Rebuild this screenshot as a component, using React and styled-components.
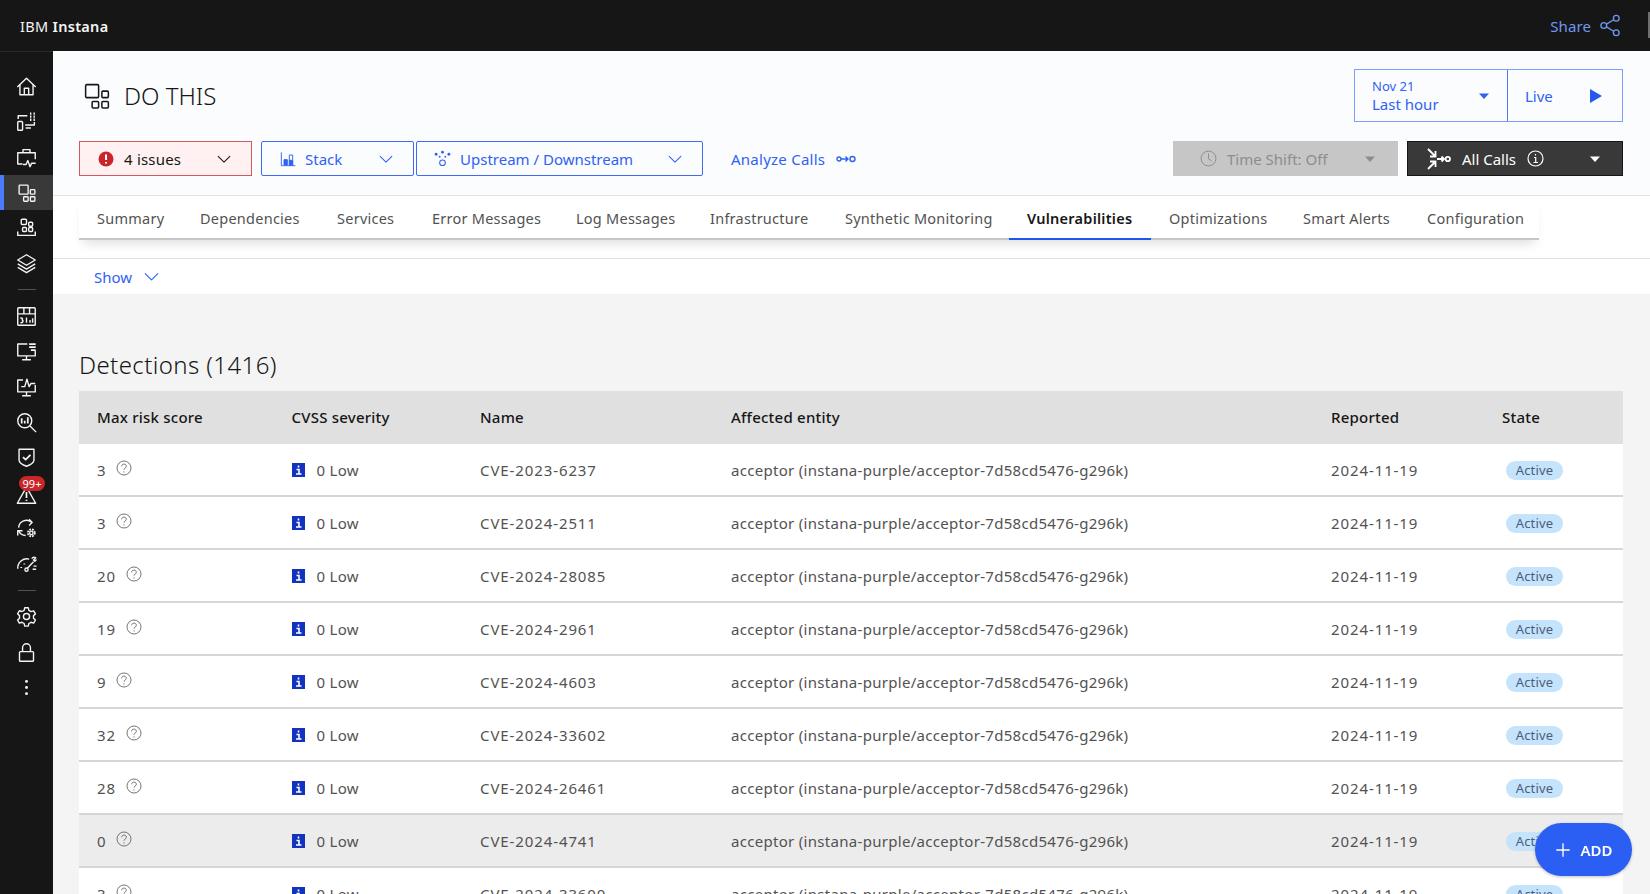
import styled, { createGlobalStyle } from "styled-components";

const GlobalStyle = createGlobalStyle`
  html, body {
    margin: 0;
    height: 100%;
    overflow: hidden;
    background: #f4f4f4;
    font-family: "Noto Sans", "Liberation Sans", sans-serif;
    font-size: 15px;
    color: #525252;
  }
  * { box-sizing: border-box; }
`;

const Icon = ({ size = 22, sw = 1.5, children, ...rest }) => (
  <svg
    width={size}
    height={size}
    viewBox="0 0 24 24"
    fill="none"
    stroke="currentColor"
    strokeWidth={sw}
    strokeLinejoin="round"
    {...rest}
  >
    {children}
  </svg>
);

const AppsGlyph = () => (
  <>
    <rect x="1.5" y="1.5" width="12" height="12" rx="1" />
    <rect x="16.5" y="7.5" width="6" height="6" rx="1" />
    <rect x="7.5" y="17" width="6" height="6" rx="1" />
    <rect x="16.5" y="17" width="6" height="6" rx="1" />
  </>
);

const navTop = [
  <><path d="M1.5 12.5 12 2.5l10.5 10" /><path d="M4.5 10v11.5h15V10" /><path d="M9.5 21.5V14h5v7.5" /></>,
  <><rect x="2" y="12" width="5.5" height="10" rx="1" /><path d="M2.5 9V5.5h10.5" /><path d="M21 12.5V16H10.5M11 19.5h6" /><path strokeWidth="2.6" d="M16 3h1.6M20 3h1.6M16 6.5h1.6M20 6.5h1.6M16 10h1.6M20 10h1.6" /></>,
  <><path d="M7.5 19.5H2V6.5h20v7.5" /><path d="M8 6.5V3h8v3.5" /><path d="M8 20h3.5l2-4.5 2.5 7 2-4h4.5" /></>,
  <AppsGlyph />,
  <><rect x="6" y="2.5" width="6" height="6" rx="1" /><rect x="14.5" y="6" width="4.5" height="4.5" rx="1" /><rect x="7.5" y="12" width="4.5" height="4.5" rx="1" /><rect x="14.5" y="12" width="4.5" height="4.5" rx="1" /><path d="M2 16.5V21h20v-4.5" /></>,
  <><path d="M12 2 22 8l-10 6L2 8Z" /><path d="m2 12.5 10 6 10-6" /><path d="m2 16.5 10 6 10-6" /></>,
];

const navMiddle = [
  <><rect x="2" y="2" width="20" height="20" rx="1" /><path d="M2 9h20M9 2v7M15.5 2v7" /><path d="M5 14c2-.8 3.2.2 2 2 1.8.4 1.2 3.5-2 3M12 13v6M16 16v3M19 14v5" /></>,
  <><path d="M13 3.5H2V17h20v-6" /><path d="M12 17v4M7 21.5h10" /><path strokeWidth="2" d="M15 3.5h7.5M15 7h7.5M17 10.5h5.5" /></>,
  <><path d="M8 3.5H2V17h20V9" /><path d="M12 17v4M7 21.5h10" /><path d="M6 11h4l2.5-8.5L15 11l2-3.5h5" /></>,
  <><circle cx="10" cy="10" r="8" /><path d="m16 16 7 7" /><path strokeWidth="2" d="M6.5 7v6M10 10v3M13.5 6v7" /></>,
  <><path d="M3.5 2.5h17V15c0 3.5-8.5 7-8.5 7s-8.5-3.5-8.5-7Z" /><path strokeWidth="2" d="m8 11.5 3 3 5.5-5.5" /></>,
  <><path d="M12 3.5 22.5 22h-21Z" /><path strokeWidth="2" d="M12 9v7M12 18v1.5" /></>,
  <><path d="M3 11a9 9 0 0 1 15-6" /><path d="M15 1.5 18.5 5 15 8.5" /><path d="M11 20a9 9 0 0 1-8-5.500" /><path d="M2 20v-5.500h5.500" /><circle cx="17.500" cy="17" r="2" /><circle cx="17.500" cy="17" r="4" strokeDasharray="2 1.200" strokeWidth="2" /></>,
  <><path d="M2 18a10.500 10.500 0 0 1 13-11" /><path strokeWidth="2" d="M6 16v1M9.500 12v1" /><circle cx="12" cy="19" r="1.800" /><path d="m13 17.500 7-7.500" /><path d="M18 6.500c1-1.500 3-2 4.500-1L20 8l1.500 1.500 2-2" /><path d="M20 15h3.500M19 18.500h4" /></>,
];

const navBottom = [
  <><circle cx="12" cy="12" r="3.500" /><path d="M10 2h4l.7 3 2.500 1.400 3-.9 2 3.500-2.200 2.100v2.800l2.200 2.100-2 3.500-3-.9-2.500 1.400-.7 3h-4l-.7-3-2.500-1.400-3 .9-2-3.500 2.200-2.100V11l-2.200-2.100 2-3.500 3 .9 2.500-1.400Z" /></>,
  <><rect x="4" y="11" width="16" height="11" rx="1" /><path d="M7.500 11V6.500a4.500 4.500 0 0 1 9 0V11" /></>,
  <g fill="currentColor" stroke="none"><circle cx="12" cy="5" r="1.700" /><circle cx="12" cy="12" r="1.700" /><circle cx="12" cy="19" r="1.700" /></g>,
];

const tabs = [
  ["Summary", 103],
  ["Dependencies", 137],
  ["Services", 95],
  ["Error Messages", 144],
  ["Log Messages", 134],
  ["Infrastructure", 135],
  ["Synthetic Monitoring", 182],
  ["Vulnerabilities", 142],
  ["Optimizations", 134],
  ["Smart Alerts", 124],
  ["Configuration", 113],
];

const rows = [
  [3, "CVE-2023-6237"],
  [3, "CVE-2024-2511"],
  [20, "CVE-2024-28085"],
  [19, "CVE-2024-2961"],
  [9, "CVE-2024-4603"],
  [32, "CVE-2024-33602"],
  [28, "CVE-2024-26461"],
  [0, "CVE-2024-4741"],
  [3, "CVE-2024-33600"],
];

const Chevron = ({ size = 14 }) => (
  <Icon size={size} sw={1.8}>
    <path d="m1.500 7 10.500 10.500L22.500 7" />
  </Icon>
);

const Caret = ({ size = 10 }) => (
  <svg width={size} height={size} viewBox="0 0 10 10">
    <path d="M0 2.500h10L5 8Z" fill="currentColor" />
  </svg>
);

export default function App() {
  return (
    <Page>
      <GlobalStyle />
      <TopBar>
        <Brand>
          IBM <b>Instana</b>
        </Brand>
        <ShareLink>
          Share
          <Icon size={23} sw={1.4}>
            <circle cx="18" cy="4.500" r="3" />
            <circle cx="5" cy="12" r="3" />
            <circle cx="18" cy="19.500" r="3" />
            <path d="m7.800 10.500 7.500-4.500M7.800 13.500l7.500 4.500" />
          </Icon>
        </ShareLink>
        <EdgeTab />
      </TopBar>
      <Body>
        <Sidebar>
          {navTop.map((glyph, i) => (
            <NavItem key={i} $active={i === 3}>
              <Icon size={i === 3 ? 18 : 21} sw={i === 3 ? 1.8 : 1.6}>{glyph}</Icon>
            </NavItem>
          ))}
          <NavRule />
          {navMiddle.map((glyph, i) => (
            <NavItem key={i} $drop={i === 5 ? 3 : 0}>
              <Icon size={21} sw={1.6}>{glyph}</Icon>
              {i === 5 && <NavBadge>99+</NavBadge>}
            </NavItem>
          ))}
          <NavRule />
          {navBottom.map((glyph, i) => (
            <NavItem key={i}>
              <Icon size={21} sw={1.6}>{glyph}</Icon>
            </NavItem>
          ))}
        </Sidebar>
        <Main>
          <Header>
            <TitleRow>
              <Title>
                <Icon size={26} sw={1.4}>
                  <AppsGlyph />
                </Icon>
                DO THIS
              </Title>
              <DateBox>
                <DateRange>
                  <span>
                    <DateSmall>Nov 21</DateSmall>
                    Last hour
                  </span>
                  <Caret />
                </DateRange>
                <LiveCell>
                  Live
                  <svg width="14" height="14" viewBox="0 0 14 14">
                    <path d="M1 0v14l12-7Z" fill="#2459f0" />
                  </svg>
                </LiveCell>
              </DateBox>
            </TitleRow>
            <ActionRow>
              <Actions>
                <IssuesButton>
                  <svg width="16" height="16" viewBox="0 0 16 16">
                    <circle cx="8" cy="8" r="7.500" fill="#c8262a" />
                    <path d="M8 3.500v5.500M8 11v1.500" stroke="#fff" strokeWidth="2" />
                  </svg>
                  <span>4 issues</span>
                  <Chevron />
                </IssuesButton>
                <FilterButton $width={153} $pad={18} $gapLeft={9}>
                  <Icon size={16} sw={1.4}>
                    <path d="M2 2v20h21" />
                    <rect x="6" y="13" width="5" height="8" fill="currentColor" />
                    <rect x="14" y="6" width="5" height="15" />
                    <rect x="14" y="14" width="5" height="7" fill="currentColor" />
                  </Icon>
                  <span>Stack</span>
                  <Chevron />
                </FilterButton>
                <FilterButton $width={287} $pad={17} $gapLeft={2}>
                  <Icon size={17} sw={1.5}>
                    <circle cx="12" cy="18" r="4" />
                    <g fill="currentColor" stroke="none">
                      <circle cx="12" cy="3" r="2" />
                      <circle cx="3" cy="6" r="2" />
                      <circle cx="21" cy="6" r="2" />
                      <circle cx="8" cy="9.500" r="1.300" />
                      <circle cx="16" cy="9.500" r="1.300" />
                    </g>
                  </Icon>
                  <span>Upstream / Downstream</span>
                  <Chevron />
                </FilterButton>
                <AnalyzeLink>
                  Analyze Calls
                  <svg width="20" height="10" viewBox="0 0 20 10" fill="none" stroke="currentColor" strokeWidth="1.400">
                    <circle cx="3" cy="5" r="2" />
                    <path d="M5 5h7M9.500 2.500 12 5 9.500 7.500" />
                    <circle cx="16.500" cy="5" r="2.500" />
                  </svg>
                </AnalyzeLink>
              </Actions>
              <Actions>
                <TimeShift>
                  <Icon size={17} sw={1.4}>
                    <circle cx="12" cy="12" r="10.500" />
                    <path d="M12 5v7.500l4.500 3" />
                  </Icon>
                  <span>Time Shift: Off</span>
                  <Caret />
                </TimeShift>
                <CallsButton>
                  <svg width="25" height="24" viewBox="0 0 25 24" fill="none" stroke="currentColor" strokeWidth="1.800">
                    <path d="M2 2l7.500 7.500M9.500 4v5.500H4" />
                    <path d="M2 22l7.500-7.500M4 14.500h5.500V20" />
                    <path d="M11 12h7M15.500 9.500 18 12l-2.500 2.500" />
                    <circle cx="21.800" cy="12" r="2.200" />
                  </svg>
                  All Calls
                  <svg width="17" height="17" viewBox="0 0 17 17" fill="none" stroke="currentColor" strokeWidth="1.200">
                    <circle cx="8.500" cy="8.500" r="7.500" />
                    <path d="M7 7.500h1.700V12.500M6.500 12.500h4.500M8.500 4v1.500" />
                  </svg>
                  <CallsCaret>
                    <Caret />
                  </CallsCaret>
                </CallsButton>
              </Actions>
            </ActionRow>
          </Header>
          <TabsBand>
            <TabStrip>
              {tabs.map(([label, width]) => (
                <Tab key={label} $width={width} $active={label === "Vulnerabilities"}>
                  {label}
                </Tab>
              ))}
            </TabStrip>
          </TabsBand>
          <ShowBar>
            Show
            <Chevron size={15} />
          </ShowBar>
          <Content>
            <Heading>Detections (1416)</Heading>
            <HeadRow>
              <span>Max risk score</span>
              <span>CVSS severity</span>
              <span>Name</span>
              <span>Affected entity</span>
              <span>Reported</span>
              <span>State</span>
            </HeadRow>
            {rows.map(([score, name], i) => (
              <DataRow key={name} $hover={i === 7}>
                <Score>
                  <Digits>{score}</Digits>
                  <Icon size={16} sw={1.2} style={{ marginTop: -3 }}>
                    <circle cx="12" cy="12" r="10.500" />
                    <path d="M8.500 9.500C8.500 5 15.500 5 15.500 9.500c0 2.500-3.500 2.500-3.500 5M12 17v1.800" />
                  </Icon>
                </Score>
                <Severity>
                  <svg width="13" height="14" viewBox="0 0 13 14">
                    <rect width="13" height="14" fill="#1133bd" />
                    <path d="M6.500 2.500v2M4.500 6.500h2.500v4.500M4 11h5.500" stroke="#fff" strokeWidth="1.600" fill="none" />
                  </svg>
                  0 Low
                </Severity>
                <Digits>{name}</Digits>
                <span>acceptor (instana-purple/acceptor-7d58cd5476-g296k)</span>
                <Digits>2024-11-19</Digits>
                <StatePill>Active</StatePill>
              </DataRow>
            ))}
          </Content>
        </Main>
      </Body>
      <AddButton>
        <Icon size={18} sw={1.8}>
          <path d="M12 3v18M3 12h18" />
        </Icon>
        ADD
      </AddButton>
    </Page>
  );
}

const Page = styled.div`
  height: 100vh;
  display: flex;
  flex-direction: column;
  overflow: hidden;
`;

const TopBar = styled.header`
  position: relative;
  height: 51px;
  flex: none;
  display: flex;
  align-items: center;
  justify-content: space-between;
  padding: 0 28px 0 20px;
  background: #161616;
  color: #f4f4f4;
`;

const Brand = styled.div`
  font-size: 14.5px;
  letter-spacing: 0.3px;
  b {
    font-weight: 600;
  }
`;

const ShareLink = styled.a`
  display: flex;
  align-items: center;
  gap: 8px;
  color: #6f98ee;
  font-size: 15px;
  letter-spacing: 0.1px;
`;

const EdgeTab = styled.span`
  position: absolute;
  right: 0;
  top: 12px;
  width: 2px;
  height: 26px;
  background: #6f6f6f;
`;

const Body = styled.div`
  flex: 1;
  min-height: 0;
  display: flex;
`;

const Sidebar = styled.nav`
  width: 53px;
  flex: none;
  padding-top: 17px;
  background: #161616;
  border-top: 1px solid #2a2a2a;
  color: #f4f4f4;
`;

const NavItem = styled.div`
  position: relative;
  height: 35.3px;
  display: flex;
  align-items: center;
  justify-content: center;
  background: ${(p) => (p.$active ? "#393939" : "transparent")};
  box-shadow: ${(p) => (p.$active ? "inset 4px 0 0 #4a7bff" : "none")};
  svg {
    margin-top: ${(p) => p.$drop || 0}px;
  }
`;

const NavRule = styled.div`
  width: 18px;
  height: 1px;
  margin: 8.5px auto 8.5px;
  background: #525252;
`;

const NavBadge = styled.span`
  position: absolute;
  left: 19px;
  top: 1px;
  width: 26px;
  height: 15px;
  border-radius: 8px;
  background: #c8262a;
  color: #fff;
  font-size: 11px;
  line-height: 15px;
  text-align: center;
`;

const Main = styled.main`
  flex: 1;
  min-width: 0;
  background: #f4f4f4;
`;

const Header = styled.section`
  height: 145px;
  padding: 18px 27px 0 26px;
  background: #fbfcfe;
  border-bottom: 1px solid #e0e4e8;
`;

const TitleRow = styled.div`
  height: 53px;
  display: flex;
  align-items: center;
  justify-content: space-between;
`;

const Title = styled.h1`
  display: flex;
  align-items: center;
  gap: 14px;
  margin: 0 0 0 5px;
  color: #161616;
  font-size: 24px;
  font-weight: 300;
`;

const DateBox = styled.div`
  width: 269px;
  height: 53px;
  display: flex;
  border: 1px solid #7f9cff;
  color: #2f62f2;
`;

const DateRange = styled.div`
  width: 153px;
  display: flex;
  align-items: center;
  justify-content: space-between;
  padding: 0 18px 0 17px;
  border-right: 1px solid #4f78f5;
  font-size: 15px;
  line-height: 19px;
`;

const DateSmall = styled.small`
  display: block;
  font-size: 13px;
  line-height: 18px;
`;

const LiveCell = styled.div`
  flex: 1;
  display: flex;
  align-items: center;
  justify-content: space-between;
  padding: 0 19px 0 17px;
  font-size: 15px;
`;

const ActionRow = styled.div`
  margin-top: 19px;
  display: flex;
  justify-content: space-between;
`;

const Actions = styled.div`
  display: flex;
  align-items: center;
`;

const ButtonBase = styled.button`
  height: 35px;
  display: flex;
  align-items: center;
  font: inherit;
  font-size: 15px;
  padding: 0;
`;

const IssuesButton = styled(ButtonBase)`
  width: 173px;
  gap: 10px;
  padding: 0 20px 0 18px;
  background: #fff1f1;
  border: 1px solid #d3595d;
  color: #161616;
  letter-spacing: 0.2px;
  span {
    flex: 1;
    text-align: left;
  }
`;

const FilterButton = styled(ButtonBase)`
  width: ${(p) => p.$width}px;
  gap: 9px;
  padding: 0 20px 0 ${(p) => p.$pad}px;
  margin-left: ${(p) => p.$gapLeft}px;
  background: transparent;
  border: 1px solid #3f6cf3;
  border-radius: 2px;
  color: #2f62f2;
  span {
    flex: 1;
    text-align: left;
  }
`;

const AnalyzeLink = styled.a`
  display: flex;
  align-items: center;
  gap: 11px;
  margin-left: 28px;
  color: #2f62f2;
  font-size: 15px;
  letter-spacing: 0.25px;
`;

const TimeShift = styled(ButtonBase)`
  width: 225px;
  gap: 10px;
  padding: 0 23px 0 27px;
  background: #c6c6c6;
  border: 0;
  color: #8d8d8d;
  span {
    flex: 1;
    text-align: left;
  }
`;

const CallsButton = styled(ButtonBase)`
  width: 216px;
  gap: 11px;
  margin-left: 9px;
  padding: 0 22px 0 18px;
  background: #393939;
  border: 1px solid #161616;
  color: #fff;
`;

const CallsCaret = styled.span`
  display: flex;
  margin-left: auto;
`;

const TabsBand = styled.div`
  height: 63px;
  background: #fff;
  border-bottom: 1px solid #e0e0e0;
`;

const TabStrip = styled.div`
  width: 1460px;
  height: 44px;
  margin-left: 26px;
  display: flex;
  border-bottom: 2px solid #c6c6c6;
  box-shadow: 0 8px 10px -4px rgba(0, 0, 0, 0.12);
`;

const Tab = styled.a`
  width: ${(p) => p.$width}px;
  height: 44px;
  flex: none;
  padding: 12px 0 0 18px;
  border-bottom: 2px solid ${(p) => (p.$active ? "#1f56f0" : "transparent")};
  color: ${(p) => (p.$active ? "#161616" : "#525252")};
  font-size: 14.5px;
  font-weight: ${(p) => (p.$active ? 600 : 400)};
  letter-spacing: 0.25px;
  white-space: nowrap;
`;

const ShowBar = styled.div`
  height: 35px;
  display: flex;
  align-items: center;
  gap: 12px;
  padding-left: 41px;
  background: #fff;
  color: #2f62f2;
  font-size: 15px;
`;

const Content = styled.section`
  padding: 54px 27px 0 26px;
`;

const Heading = styled.h2`
  margin: 0;
  height: 43px;
  color: #161616;
  font-size: 24px;
  font-weight: 300;
  letter-spacing: 0.4px;
  line-height: 34px;
`;

const columns = "194.5px 188.5px 251px 600px 171px 1fr";

const HeadRow = styled.div`
  height: 53px;
  display: grid;
  grid-template-columns: ${columns};
  align-items: center;
  padding: 0 0 2px 18px;
  background: #e0e0e0;
  color: #161616;
  font-weight: 500;
  letter-spacing: 0.22px;
`;

const DataRow = styled.div`
  height: 53px;
  display: grid;
  grid-template-columns: ${columns};
  align-items: center;
  padding-left: 18px;
  background: ${(p) => (p.$hover ? "#ececec" : "#fff")};
  border-bottom: 2px solid #d6d6d6;
  letter-spacing: 0.3px;
`;

const Digits = styled.span`
  letter-spacing: 0.9px;
`;

const Score = styled.div`
  display: flex;
  align-items: center;
  gap: 10px;
  color: #525252;
`;

const Severity = styled.div`
  display: flex;
  align-items: center;
  gap: 12px;
`;

const StatePill = styled.span`
  width: 57px;
  height: 19px;
  margin: 2px 0 0 4px;
  border-radius: 10px;
  background: #c5e3fb;
  color: #4a5f7e;
  font-size: 13px;
  line-height: 19px;
  letter-spacing: 0.2px;
  text-align: center;
`;

const AddButton = styled.button`
  position: fixed;
  left: 1535px;
  top: 823px;
  width: 97px;
  height: 53px;
  display: flex;
  align-items: center;
  justify-content: center;
  gap: 8px;
  border: 0;
  border-radius: 27px;
  background: #2b5ef2;
  box-shadow: 0 1px 3px rgba(0, 0, 0, 0.25);
  color: #fff;
  font: inherit;
  font-size: 15px;
  font-weight: 600;
`;
